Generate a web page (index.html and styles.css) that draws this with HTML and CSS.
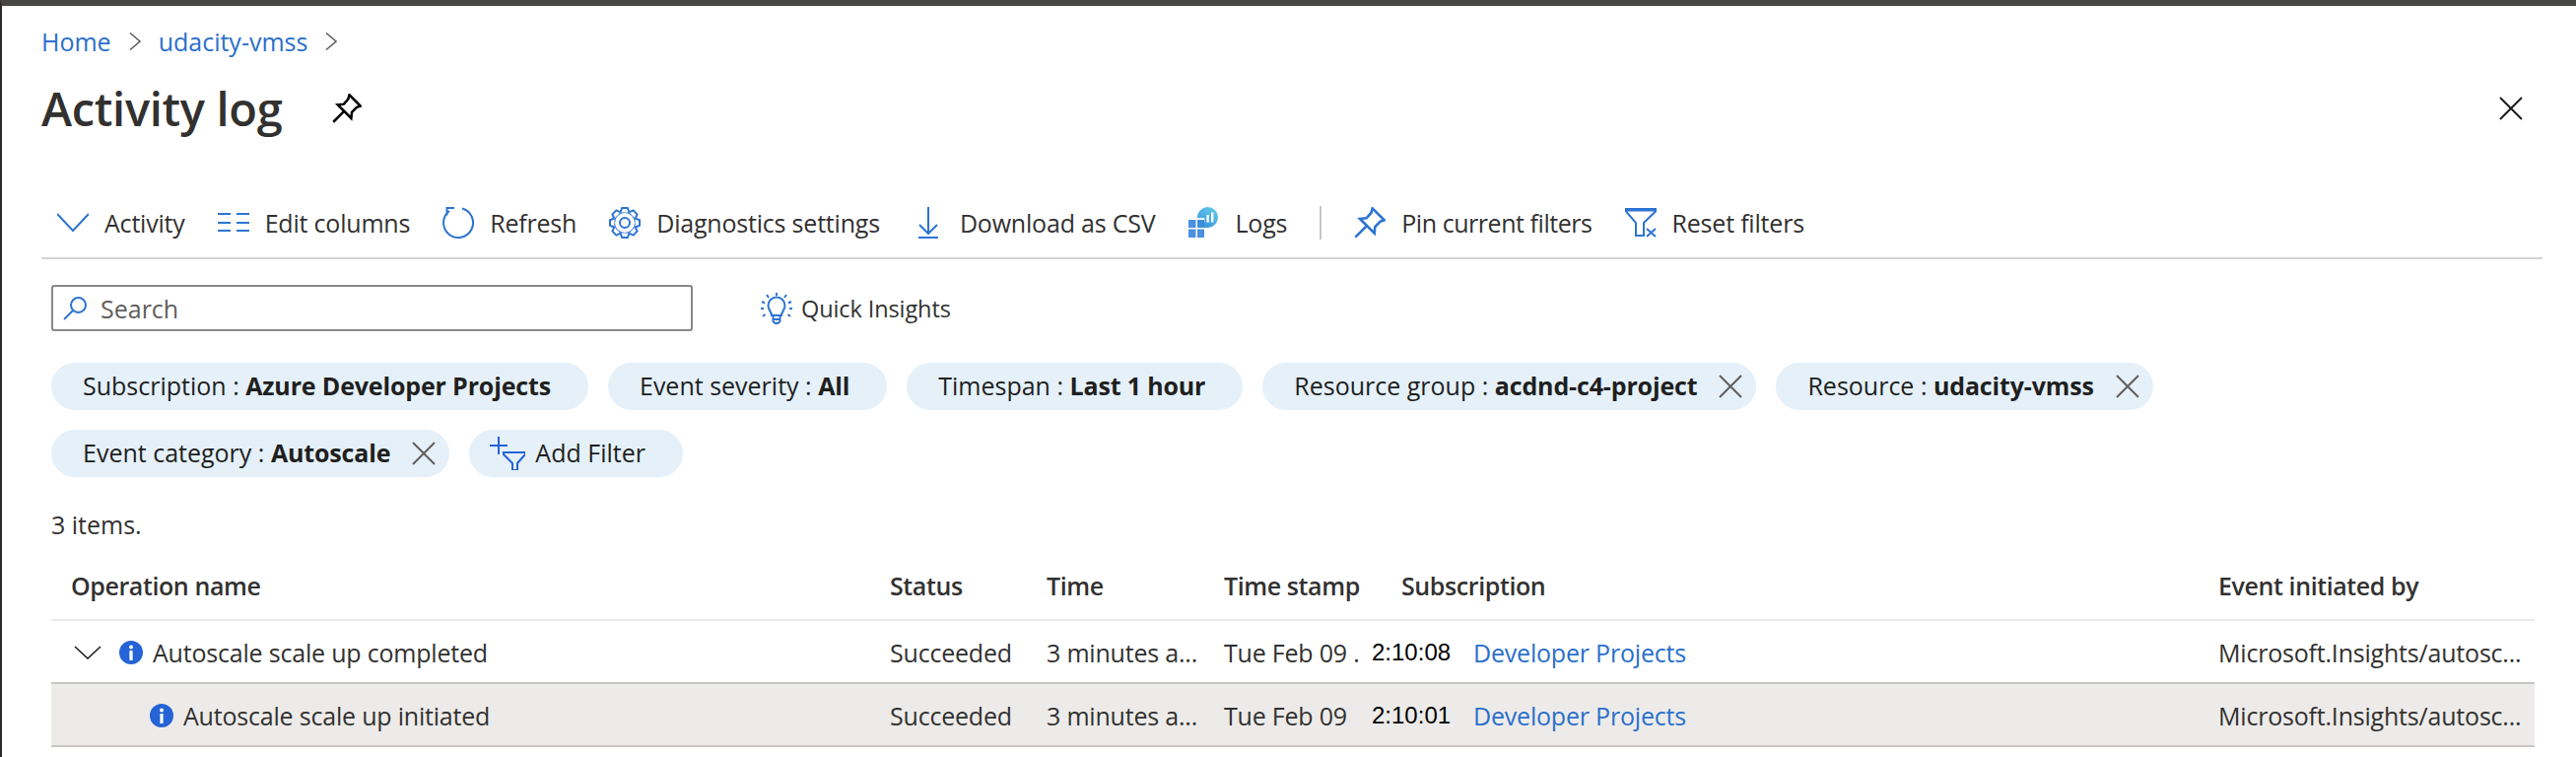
FILE: index.html
```html
<!DOCTYPE html>
<html>
<head>
<meta charset="utf-8"/>
<title>Activity log</title>
<link rel="stylesheet" href="styles.css">
</head>
<body>
<svg class="defs" width="0" height="0">
	<defs>
		<g id="pin-shape">
			<path d="M14 1 L23 10 L20 11 L16 15 L15.5 20 L4.5 9 L9.5 8.5 L13 4.5 Z"/>
			<path d="M1 23 L9.5 14.5"/>
		</g>
		<path id="x-shape" d="M1 1 L23 23 M23 1 L1 23"/>
		<g id="info-shape">
			<circle cx="12" cy="12" r="12" fill="#2563d6"/>
			<circle cx="12" cy="6.5" r="2" fill="#fff"/>
			<rect x="10.4" y="10" width="3.2" height="10" fill="#fff"/>
		</g>
		<path id="gear-tooth" d="M-4.5 -10.6 L-2.8 -15 H2.8 L4.5 -10.6" fill="#fff"/>
	</defs>
</svg>
<main>
	<nav class="crumbs">
		<a href="#">Home</a>
		<svg class="crumb-sep" viewBox="0 0 12 18"><path d="M1 0.5 L11 9 L1 17.5"/></svg>
		<a href="#">udacity-vmss</a>
		<svg class="crumb-sep" viewBox="0 0 12 18"><path d="M1 0.5 L11 9 L1 17.5"/></svg>
	</nav>
	<header class="title-row">
		<h1>Activity log</h1>
		<svg class="title-pin" viewBox="0 0 24 24"><use href="#pin-shape"/></svg>
		<svg class="close" viewBox="0 0 24 24"><use href="#x-shape"/></svg>
	</header>
	<div class="toolbar">
		<button class="tool">
			<svg class="tool-icon" viewBox="0 0 32 32"><path d="M0 7 L16 24 L32 7"/></svg>Activity
		</button>
		<button class="tool">
			<svg class="tool-icon" viewBox="0 0 32 32"><path d="M0 7 H13 M19 7 H32 M0 16 H13 M19 16 H32 M0 24 H13 M19 24 H32"/></svg>Edit columns
		</button>
		<button class="tool">
			<svg class="tool-icon" viewBox="0 0 32 32"><path d="M7 4 A15 15 0 1 0 20 1.5 M12 1 H4.5 V8.5"/></svg>Refresh
		</button>
		<button class="tool">
			<svg class="tool-icon" viewBox="-16 -16 32 32">
				<circle r="11"/>
				<use href="#gear-tooth"/>
				<use href="#gear-tooth" transform="rotate(45)"/>
				<use href="#gear-tooth" transform="rotate(90)"/>
				<use href="#gear-tooth" transform="rotate(135)"/>
				<use href="#gear-tooth" transform="rotate(180)"/>
				<use href="#gear-tooth" transform="rotate(225)"/>
				<use href="#gear-tooth" transform="rotate(270)"/>
				<use href="#gear-tooth" transform="rotate(315)"/>
				<circle r="5"/>
			</svg>Diagnostics settings
		</button>
		<button class="tool">
			<svg class="tool-icon" viewBox="0 0 32 32"><path d="M16 0 V27 M7 18 L16 27 L25 18 M6 31 H26"/></svg>Download as CSV
		</button>
		<button class="tool">
			<svg class="tool-icon" viewBox="0 0 32 32">
				<defs>
					<linearGradient id="logs-blob" x1="0.8" y1="0" x2="0.2" y2="1">
						<stop offset="0" stop-color="#62cdea"/>
						<stop offset="1" stop-color="#3a8fdc"/>
					</linearGradient>
				</defs>
				<path class="filled" fill="url(#logs-blob)" d="M10 11 A10.5 10.5 0 1 1 21 21 H17 V11 Z"/>
				<path class="filled" fill="#fff" d="M15 11 h2.4 v4.5 h-2.4 Z M19.4 8 h2.4 v7.5 h-2.4 Z M24 5.5 h2.4 v10 h-2.4 Z"/>
				<path class="filled" fill="#4b8fe0" d="M1 13 h7.5 v8 h-7.5 Z M1 22.5 h7.5 v8.5 h-7.5 Z M10 22.5 h7 v8.5 h-7 Z"/>
				<path class="filled" fill="#3a8fdc" d="M10 13 h7 v8 h-7 Z"/>
			</svg>Logs
		</button>
		<span class="tool-sep"></span>
		<button class="tool tool-tight">
			<svg class="tool-icon" viewBox="0 0 24 24"><use href="#pin-shape"/></svg>Pin current filters
		</button>
		<button class="tool">
			<svg class="tool-icon" viewBox="0 0 32 32"><path d="M1 2 H31 V4.5 L19 16 V29 H11 V16 L1 4.5 Z M1 3.5 H31 M22 22 L31 30 M31 22 L22 30"/></svg>Reset filters
		</button>
	</div>
	<div class="search-row">
		<label class="search">
			<svg viewBox="0 0 24 24"><circle cx="15.5" cy="8.5" r="7.5"/><path d="M10 14 L1 23"/></svg>
			<span>Search</span>
		</label>
		<button class="insights">
			<svg viewBox="0 0 32 32"><path d="M11 23 C11 19 7.5 18 7.5 13 A8.5 8.5 0 0 1 24.5 13 C24.5 18 21 19 21 23 Z M12.5 23 V29 L14.5 31 H17.5 L19.5 29 V23 M12.5 27 H19.5 M16 0 V3 M6 2 L8 5 M26 2 L24 5 M1 9 L4 10.5 M31 9 L28 10.5 M0 16 H3 M32 16 H29 M2 24 L4.5 22 M30 24 L27.5 22"/></svg>
			Quick Insights
		</button>
	</div>
	<div class="chips">
		<span class="chip">Subscription :&nbsp;<b>Azure Developer Projects</b></span>
		<span class="chip">Event severity :&nbsp;<b>All</b></span>
		<span class="chip">Timespan :&nbsp;<b>Last 1 hour</b></span>
		<span class="chip">Resource group :&nbsp;<b>acdnd-c4-project</b><svg class="chip-x" viewBox="0 0 24 24"><use href="#x-shape"/></svg></span>
		<span class="chip">Resource :&nbsp;<b>udacity-vmss</b><svg class="chip-x" viewBox="0 0 24 24"><use href="#x-shape"/></svg></span>
		<span class="chip">Event category :&nbsp;<b>Autoscale</b><svg class="chip-x" viewBox="0 0 24 24"><use href="#x-shape"/></svg></span>
		<span class="chip chip-add">
			<svg viewBox="0 0 36 34"><path d="M9 0 V18 M0 9 H18"/><path class="funnel" d="M14 16 H36 V18 L28 27 V34 H23 V27 L14 18 Z"/></svg>
			Add Filter
		</span>
	</div>
	<p class="count">3 items.</p>
	<div class="log-table">
		<div class="log-row log-head">
			<div>Operation name</div>
			<div>Status</div>
			<div>Time</div>
			<div>Time stamp</div>
			<div>Subscription</div>
			<div>Event initiated by</div>
		</div>
		<div class="log-row log-item">
			<div class="op">
				<svg class="expander" viewBox="0 0 28 14"><path d="M1 1 L14 13 L27 1"/></svg>
				<svg class="info" viewBox="0 0 24 24"><use href="#info-shape"/></svg>
				Autoscale scale up completed
			</div>
			<div>Succeeded</div>
			<div>3 minutes a...</div>
			<div class="stamp"><span class="stamp-date">Tue Feb 09 .</span><span class="stamp-time">2:10:08</span></div>
			<div class="sub"><a href="#">Developer Projects</a></div>
			<div>Microsoft.Insights/autosc...</div>
		</div>
		<div class="log-row log-item selected">
			<div class="op child">
				<svg class="info" viewBox="0 0 24 24"><use href="#info-shape"/></svg>
				Autoscale scale up initiated
			</div>
			<div>Succeeded</div>
			<div>3 minutes a...</div>
			<div class="stamp"><span class="stamp-date">Tue Feb 09</span><span class="stamp-time">2:10:01</span></div>
			<div class="sub"><a href="#">Developer Projects</a></div>
			<div>Microsoft.Insights/autosc...</div>
		</div>
	</div>
</main>
</body>
</html>
```

FILE: styles.css
```css
* {
	box-sizing: border-box;
}
html, body {
	margin: 0;
	height: 100%;
}
body {
	font-family: "Open Sans", "Noto Sans", sans-serif;
	font-size: 25px;
	color: #323130;
	background-color: #fff;
	border-top: 6px solid #484644;
	border-left: 2px solid #2b2a29;
	overflow: hidden;
}
a {
	color: #2b6fcb;
	text-decoration: none;
}
button {
	font: inherit;
	color: inherit;
	background: none;
	border: 0;
	padding: 0;
}
svg {
	fill: none;
	stroke: currentColor;
	stroke-width: 2;
	flex: none;
}
.defs {
	position: absolute;
}
main {
	padding: 0 34px 0 40px;
}

.crumbs {
	display: flex;
	align-items: center;
	height: 72px;
}
.crumb-sep {
	width: 12px;
	height: 18px;
	margin: 0 18px;
	color: #605e5c;
	stroke-width: 1.5;
}
.crumb-sep:last-child {
	margin-right: 0;
}

.title-row {
	display: flex;
	align-items: center;
	height: 60px;
	margin-top: 2px;
}
h1 {
	font-size: 47px;
	font-weight: 600;
	margin: 0;
	letter-spacing: -0.3px;
}
.title-pin {
	width: 30px;
	height: 30px;
	margin-left: 50px;
	color: #000;
}
.close {
	width: 24px;
	height: 24px;
	margin-left: auto;
	margin-right: 20px;
	color: #201f1e;
}

.toolbar {
	display: flex;
	align-items: center;
	gap: 33px;
	height: 90px;
	margin-top: 33px;
	padding: 18px 0 0 16px;
	border-bottom: 2px solid #d4d4d4;
	letter-spacing: -0.2px;
}
.tool {
	display: flex;
	align-items: center;
	gap: 16px;
	white-space: nowrap;
	letter-spacing: inherit;
}
.tool-tight {
	letter-spacing: -0.45px;
}
.tool-icon {
	width: 32px;
	height: 32px;
	color: #2e74d1;
}
.filled {
	stroke: none;
}
.tool-sep {
	width: 2px;
	height: 34px;
	background-color: #c8c6c4;
}

.search-row {
	display: flex;
	align-items: center;
	margin-top: 26px;
	padding-left: 10px;
}
.search {
	display: flex;
	align-items: center;
	gap: 14px;
	width: 651px;
	height: 47px;
	padding-left: 10px;
	border: 2px solid #8a8886;
	border-radius: 3px;
	color: #605e5c;
}
.search svg {
	width: 24px;
	height: 24px;
	color: #2e74d1;
}
.insights {
	display: flex;
	align-items: center;
	gap: 9px;
	margin-left: 69px;
	font-size: 23.5px;
	letter-spacing: -0.1px;
}
.insights svg {
	width: 32px;
	height: 32px;
	color: #2e74d1;
}

.chips {
	display: flex;
	flex-wrap: wrap;
	gap: 20px;
	margin-top: 32px;
	padding-left: 10px;
}
.chip {
	display: flex;
	align-items: center;
	height: 48px;
	padding: 0 38px 2px 32px;
	border-radius: 24px;
	background-color: #e5f0f9;
	color: #201f1e;
	white-space: nowrap;
}
.chip b {
	font-weight: 700;
	letter-spacing: -0.15px;
}
.chip-x {
	width: 24px;
	height: 24px;
	margin-left: 22px;
	margin-right: -24px;
	margin-top: 2px;
	color: #605e5c;
}
.chip-add {
	padding: 0 38px 2px 21px;
	gap: 10px;
}
.chip-add svg {
	width: 36px;
	height: 34px;
	margin-top: 2px;
	color: #2563d6;
}

.count {
	margin: 34px 0 0 10px;
	line-height: 28px;
}

.log-table {
	margin: 14px 8px 0 10px;
	letter-spacing: -0.2px;
}
.log-row {
	display: grid;
	grid-template-columns: 831px 159px 180px 180px 829px 1fr;
	align-items: center;
	padding-left: 20px;
	white-space: nowrap;
}
.log-head {
	height: 70px;
	font-weight: 600;
	letter-spacing: -0.4px;
	border-bottom: 2px solid #edebe9;
}
.log-item {
	height: 64px;
	padding-top: 2px;
	border-bottom: 2px solid #c8c6c4;
}
.selected {
	background-color: #edebe9;
}
.op {
	display: flex;
	align-items: center;
	gap: 10px;
}
.child {
	padding-left: 80px;
}
.expander {
	width: 28px;
	height: 14px;
	margin-left: 3px;
	margin-right: 8px;
	color: #201f1e;
	stroke-width: 1.6;
}
.info {
	width: 24px;
	height: 24px;
	stroke: none;
}
.stamp {
	display: flex;
}
.stamp-date {
	flex: none;
	width: 150px;
}
.stamp-time {
	font-family: "Liberation Sans", sans-serif;
	font-size: 24px;
	letter-spacing: 0;
	color: #000;
	padding-top: 3px;
}
.sub {
	padding-left: 73px;
}
```
